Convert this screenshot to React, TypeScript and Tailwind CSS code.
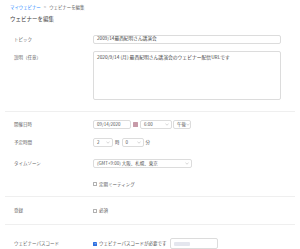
import React from 'react';

const font = { fontFamily: '"Noto Sans CJK JP", "Noto Sans", sans-serif' };

function Chevron() {
  return (
    <svg width="4" height="3" viewBox="0 0 4 3" className="shrink-0">
      <path d="M0.5 0.8 L2 2.2 L3.5 0.8" stroke="#aaa" strokeWidth="0.5" fill="none" />
    </svg>
  );
}

function Select({ value, className }: { value: string; className: string }) {
  return (
    <div
      className={`flex items-center justify-between h-[9px] border border-[#dcdcdc] rounded-[2px] pl-[3px] pr-[2px] text-[4.5px] text-[#555] bg-white ${className}`}
    >
      <span className="whitespace-nowrap">{value}</span>
      <Chevron />
    </div>
  );
}

function Label({ children, className = '' }: { children: React.ReactNode; className?: string }) {
  return <div className={`w-[93px] shrink-0 pl-[14px] text-[4.5px] text-[#666] ${className}`}>{children}</div>;
}

function Check({ checked }: { checked?: boolean }) {
  return checked ? (
    <span className="w-[4px] h-[4px] bg-[#2d6fe0] rounded-[0.5px] flex items-center justify-center">
      <svg width="3" height="3" viewBox="0 0 3 3">
        <path d="M0.5 1.5 L1.2 2.2 L2.5 0.7" stroke="white" strokeWidth="0.5" fill="none" />
      </svg>
    </span>
  ) : (
    <span className="w-[4px] h-[4px] border border-[#b0b0b0] rounded-[0.5px] bg-white" />
  );
}

export default function App() {
  return (
    <div className="w-[300px] h-[249px] bg-white overflow-hidden flex flex-col" style={font}>
      {/* breadcrumb */}
      <div className="h-[18px] flex items-center pl-[10px] gap-[2px] text-[4.4px]">
        <span className="text-[#2d8cff]">マイウェビナー</span>
        <span className="text-[#aaa] px-[1px]">&gt;</span>
        <span className="text-[#666]">ウェビナーを編集</span>
      </div>
      <div className="h-[10px] flex items-center pl-[10px] text-[5.5px] text-[#444]">ウェビナーを編集</div>

      {/* topic */}
      <div className="mt-[11px] flex items-center">
        <Label>トピック</Label>
        <div className="w-[188px] h-[9px] border border-[#dcdcdc] rounded-[2px] flex items-center pl-[3px] text-[4.7px] text-[#444]">
          2009/14最西紀明さん講演会
        </div>
      </div>

      {/* description */}
      <div className="mt-[7px] flex items-start">
        <Label className="pt-[3px]">説明（任意）</Label>
        <div className="w-[188px] h-[49px] border border-[#dcdcdc] rounded-[2px] pl-[3px] pt-[2px] text-[4.8px] text-[#444] leading-[6px]">
          2020/9/14 (月) 最西紀明さん講演会のウェビナー配信URLです
        </div>
      </div>

      <div className="mt-[11px] mx-[5px] border-t border-[#efefef]" />

      {/* date */}
      <div className="mt-[8px] flex items-center">
        <Label>開催日時</Label>
        <div className="w-[38px] h-[9px] border border-[#dcdcdc] rounded-[2px] flex items-center pl-[3px] text-[4.5px] text-[#555]">
          09/14/2020
        </div>
        <span className="ml-[2px] w-[5px] h-[5px] bg-[#c79aa8] rounded-[0.5px]" />
        <Select value="6:00" className="ml-[2px] w-[32px]" />
        <Select value="午後" className="ml-[1px] w-[18px]" />
      </div>

      {/* duration */}
      <div className="mt-[9px] flex items-center text-[4.5px] text-[#555]">
        <Label>予定時間</Label>
        <Select value="2" className="w-[20px]" />
        <span className="mx-[2px]">時</span>
        <Select value="0" className="w-[22px]" />
        <span className="ml-[2px]">分</span>
      </div>

      {/* timezone */}
      <div className="mt-[12px] flex items-center">
        <Label>タイムゾーン</Label>
        <Select value="(GMT+9:00) 大阪、札幌、東京" className="w-[99px]" />
      </div>

      <div className="mt-[13px] flex items-center">
        <div className="w-[93px] shrink-0" />
        <Check />
        <span className="ml-[2px] text-[4.5px] text-[#555]">定期ミーティング</span>
      </div>

      <div className="mt-[9px] mx-[5px] border-t border-[#efefef]" />

      {/* registration */}
      <div className="mt-[10px] flex items-center">
        <Label>登録</Label>
        <Check />
        <span className="ml-[2px] text-[4.5px] text-[#555]">必須</span>
      </div>

      <div className="mt-[10px] mx-[5px] border-t border-[#efefef]" />

      {/* passcode */}
      <div className="mt-[13px] flex items-center">
        <Label>ウェビナーパスコード</Label>
        <Check checked />
        <span className="ml-[2px] text-[4.5px] text-[#555] whitespace-nowrap">ウェビナーパスコードが必要です</span>
        <div className="ml-[4px] w-[48px] h-[11px] border border-[#dcdcdc] rounded-[2px] flex items-center pl-[3px]">
          <span className="w-[16px] h-[4px] bg-[#e4e6ee] rounded-[1px]" />
        </div>
      </div>
    </div>
  );
}
